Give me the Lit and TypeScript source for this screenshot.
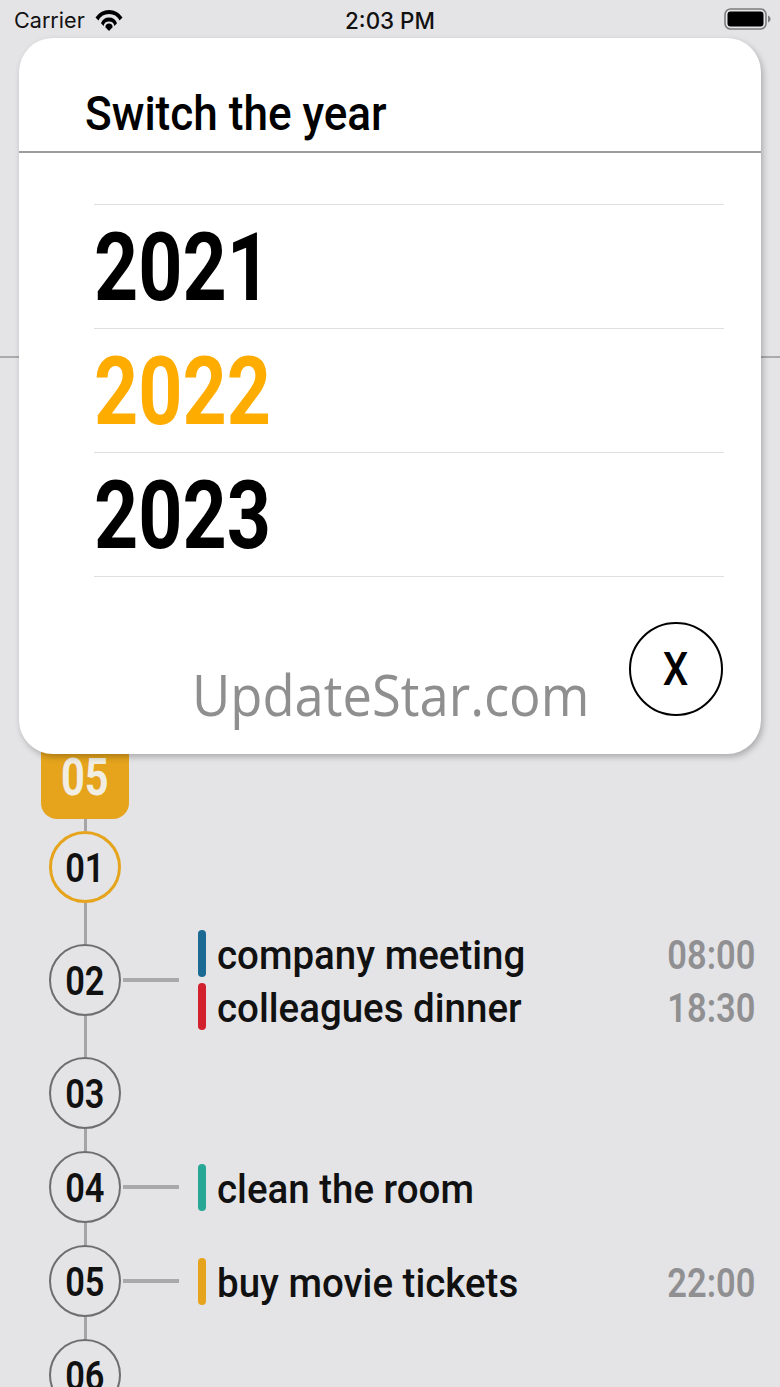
import { LitElement, html, css, svg } from 'lit';
import { customElement } from 'lit/decorators.js';

type Item = { color: string; text: string; time: string };
type Day = { n: string; link: number; active?: boolean; items: Item[] };

const days: Day[] = [
  { n: '01', link: 41, active: true, items: [] },
  { n: '02', link: 41, items: [
    { color: '#1a6a94', text: 'company meeting', time: '08:00' },
    { color: '#d2202c', text: 'colleagues dinner', time: '18:30' },
  ] },
  { n: '03', link: 22, items: [] },
  { n: '04', link: 22, items: [{ color: '#27a796', text: 'clean the room', time: '' }] },
  { n: '05', link: 22, items: [{ color: '#e5a41c', text: 'buy movie tickets', time: '22:00' }] },
  { n: '06', link: 0, items: [] },
];

@customElement('app-root')
export class AppRoot extends LitElement {
  static styles = css`
    :host {
      display: block;
      position: relative;
      width: 780px;
      height: 1387px;
      overflow: hidden;
      background: #e4e4e7;
      font-family: 'Roboto', 'Liberation Sans', sans-serif;
      color: #111;
    }

    /* the original face is a narrow DIN, so Roboto gets squeezed a little */
    .squeeze { display: inline-block; transform-origin: left center; white-space: nowrap; }

    .status {
      height: 38px;
      box-sizing: border-box;
      padding: 2px 8px 0 14px;
      display: grid;
      grid-template-columns: 1fr auto 1fr;
      align-items: center;
      font-family: 'Inter', sans-serif;
      font-size: 21.6px;
      color: #111;
    }
    .status-left { display: flex; align-items: center; gap: 10px; }
    .status-right { display: flex; justify-content: flex-end; }
    .status-right svg { margin-top: -2px; }
    .clock { font-size: 22.4px; font-weight: 500; margin-left: -6px; }

    .backdrop-line {
      height: 2px;
      background: #aaaaac;
      margin-top: 318px;
    }

    .timeline {
      padding: 365px 25px 0 41px;
    }
    .month {
      width: 88px;
      height: 96px;
      box-sizing: border-box;
      padding-top: 27px;
      text-align: center;
      background: #e5a41c;
      border-radius: 0 0 16px 16px;
      color: #f1ede2;
      font-size: 52px;
      line-height: 56px;
      font-weight: 700;
    }
    .month .squeeze { transform: scaleX(0.8); transform-origin: center; }
    .stub { width: 3px; height: 12px; margin-left: 43px; background: #a5a5a7; }

    .day { display: flex; align-items: flex-start; padding-left: 8px; }
    .rail { width: 72px; display: flex; flex-direction: column; align-items: center; flex: none; }
    .link { width: 3px; background: #a5a5a7; }
    .circle {
      width: 72px;
      height: 72px;
      box-sizing: border-box;
      padding-top: 2px;
      border: 2px solid #6e6e70;
      border-radius: 50%;
      display: flex;
      align-items: center;
      justify-content: center;
      font-size: 40px;
      font-weight: 600;
      flex: none;
    }
    .circle .squeeze { transform: scaleX(0.86); transform-origin: center; }
    .circle.active { border: 3px solid #e5a41c; }
    .detail { flex: 1; height: 72px; display: flex; align-items: center; }
    .tick { width: 56px; height: 4px; background: #a9a9ab; margin: 0 19px 0 2px; flex: none; }
    .events { flex: 1; display: flex; flex-direction: column; gap: 6px; }
    .event { display: flex; align-items: center; height: 47px; }
    .bar { width: 8px; height: 47px; border-radius: 4px; flex: none; margin-right: 11px; }
    .label { flex: 1; padding-top: 4px; font-size: 40px; font-weight: 500; line-height: 47px; }
    .label .squeeze { transform: scaleX(0.962); }
    .time { padding-top: 4px; font-size: 40px; font-weight: 600; line-height: 47px; color: #909093; }
    .time .squeeze { transform: scaleX(0.86); transform-origin: right center; }

    .modal {
      position: absolute;
      left: 19px;
      top: 38px;
      width: 742px;
      height: 716px;
      background: #fff;
      border-radius: 34px;
      box-shadow: 2px 3px 6px rgba(0, 0, 0, 0.25);
      display: flex;
      flex-direction: column;
    }
    .modal-head {
      height: 115px;
      box-sizing: border-box;
      padding: 50px 0 0 66px;
      border-bottom: 2px solid #9c9c9c;
      font-size: 48px;
      font-weight: 500;
      line-height: 52px;
      color: #000;
    }
    .modal-head .squeeze { transform: scaleX(0.918); }
    .years { margin: 51px 37px 0 75px; border-top: 1px solid #e0e0e0; }
    .year {
      height: 123px;
      border-bottom: 1px solid #e0e0e0;
      font-size: 94px;
      line-height: 127px;
      font-weight: 700;
      color: #000;
    }
    .year .squeeze { transform: scaleX(0.82); }
    .year.current { color: #ffac00; }
    .modal-foot {
      flex: 1;
      position: relative;
    }
    .brand {
      position: absolute;
      left: 173px;
      top: 85px;
      font-family: 'Open Sans', sans-serif;
      font-size: 56px;
      line-height: 64px;
      color: #8f8f8f;
    }
    .brand.squeeze { transform: scaleX(0.938); }
    .close {
      position: absolute;
      right: 38px;
      top: 45px;
      width: 94px;
      height: 94px;
      box-sizing: border-box;
      border: 2px solid #000;
      border-radius: 50%;
      background: #fff;
      display: flex;
      align-items: center;
      justify-content: center;
      font-size: 46px;
      font-weight: 500;
      color: #000;
      font-family: inherit;
      padding: 0;
    }
    .close .squeeze { transform: scaleX(0.88); transform-origin: center; }
  `;

  private renderDay(d: Day) {
    return html`
      <div class="day">
        <div class="rail">
          <div class="circle ${d.active ? 'active' : ''}"><span class="squeeze">${d.n}</span></div>
          ${d.link ? html`<div class="link" style="height:${d.link}px"></div>` : ''}
        </div>
        ${d.items.length ? html`
          <div class="detail">
            <div class="tick"></div>
            <div class="events">
              ${d.items.map((e) => html`
                <div class="event">
                  <span class="bar" style="background:${e.color}"></span>
                  <span class="label"><span class="squeeze">${e.text}</span></span>
                  <span class="time"><span class="squeeze">${e.time}</span></span>
                </div>`)}
            </div>
          </div>` : ''}
      </div>`;
  }

  render() {
    return html`
      <div class="status">
        <div class="status-left">
          <span>Carrier</span>
          <svg width="28" height="21" viewBox="0 0 28 21">
            ${svg`<path d="M0.5 7.5 A15.9 15.9 0 0 1 27.5 7.5 L24.5 10.4 A11.8 11.8 0 0 0 3.5 10.4 Z" fill="#000"/>
            <path d="M6 13.2 A8.5 8.5 0 0 1 22 13.2 L19.4 16 A5.5 5.5 0 0 0 8.6 16 Z" fill="#000"/>
            <path d="M14 21 L10.4 17.2 A3.6 3.6 0 0 1 17.6 17.2 Z" fill="#000"/>`}
          </svg>
        </div>
        <span class="clock">2:03 PM</span>
        <div class="status-right">
          <svg width="48" height="24" viewBox="0 0 48 24">
            ${svg`<rect x="1" y="2" width="41" height="20" rx="5.5" fill="none" stroke="#7d7d7f" stroke-width="1.6"/>
            <rect x="3.5" y="4.5" width="36" height="15" rx="3" fill="#000"/>
            <path d="M44 8.5 C46 9.3 46.6 11 46.6 12 C46.6 13 46 14.7 44 15.5 Z" fill="#7d7d7f"/>`}
          </svg>
        </div>
      </div>
      <div class="backdrop-line"></div>
      <div class="timeline">
        <div class="month"><span class="squeeze">05</span></div>
        <div class="stub"></div>
        ${days.map((d) => this.renderDay(d))}
      </div>
      <div class="modal">
        <div class="modal-head"><span class="squeeze">Switch the year</span></div>
        <div class="years">
          <div class="year"><span class="squeeze">2021</span></div>
          <div class="year current"><span class="squeeze">2022</span></div>
          <div class="year"><span class="squeeze">2023</span></div>
        </div>
        <div class="modal-foot">
          <span class="brand squeeze">UpdateStar.com</span>
          <button class="close"><span class="squeeze">X</span></button>
        </div>
      </div>
    `;
  }
}
